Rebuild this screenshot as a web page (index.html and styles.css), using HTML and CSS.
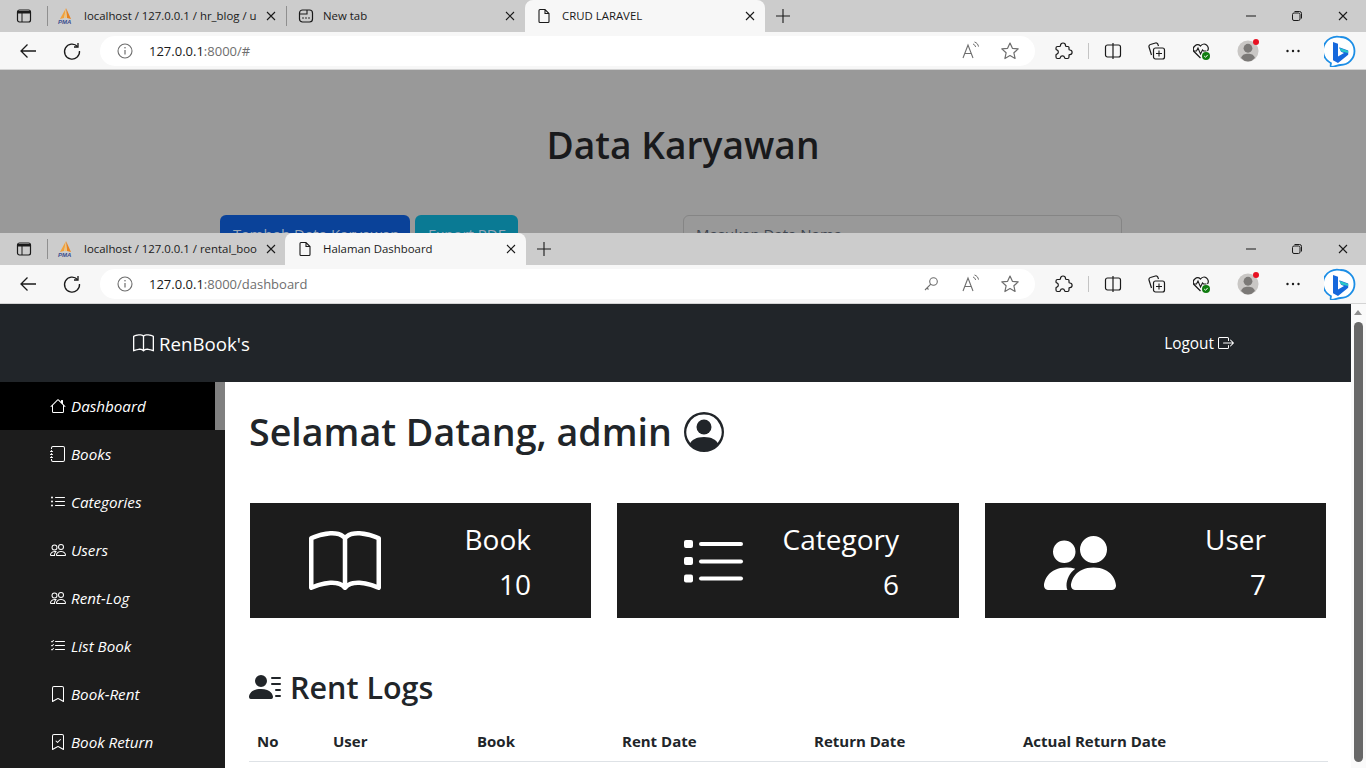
FILE: index.html
```html
<!DOCTYPE html>
<html lang="id">
<head>
    <meta charset="UTF-8">
    <title>Halaman Dashboard</title>
    <link rel="stylesheet" href="styles.css">
</head>
<body>
    <!-- shared icons -->
    <svg class="icon-defs" width="0" height="0">
        <symbol id="i-book" viewBox="0 0 16 16"><path d="M1 2.828c.885-.37 2.154-.769 3.388-.893 1.33-.134 2.458.063 3.112.752v9.746c-.935-.53-2.12-.603-3.213-.493-1.18.12-2.37.461-3.287.811V2.828zm7.5-.141c.654-.689 1.782-.886 3.112-.752 1.234.124 2.503.523 3.388.893v9.923c-.918-.35-2.107-.692-3.287-.81-1.094-.111-2.278-.039-3.213.492V2.687zM8 1.783C7.015.936 5.587.81 4.287.94c-1.514.153-3.042.672-3.994 1.105A.5.5 0 0 0 0 2.5v11a.5.5 0 0 0 .707.455c.882-.4 2.303-.881 3.68-1.02 1.409-.142 2.59.087 3.223.877a.5.5 0 0 0 .78 0c.633-.79 1.814-1.019 3.222-.877 1.378.139 2.8.62 3.681 1.02A.5.5 0 0 0 16 13.5v-11a.5.5 0 0 0-.293-.455c-.952-.433-2.48-.952-3.994-1.105C10.413.809 8.985.936 8 1.783z"/></symbol>
        <symbol id="i-house" viewBox="0 0 16 16"><path d="M8.707 1.5a1 1 0 0 0-1.414 0L.646 8.146a.5.5 0 0 0 .708.708L2 8.207V13.5A1.5 1.5 0 0 0 3.5 15h9a1.5 1.5 0 0 0 1.5-1.5V8.207l.646.647a.5.5 0 0 0 .708-.708L13 5.793V2.5a.5.5 0 0 0-.5-.5h-1a.5.5 0 0 0-.5.5v1.293L8.707 1.5ZM13 7.207V13.5a.5.5 0 0 1-.5.5h-9a.5.5 0 0 1-.5-.5V7.207l5-5 5 5Z"/></symbol>
        <symbol id="i-journal" viewBox="0 0 16 16"><path d="M3 0h10a2 2 0 0 1 2 2v12a2 2 0 0 1-2 2H3a2 2 0 0 1-2-2v-1h1v1a1 1 0 0 0 1 1h10a1 1 0 0 0 1-1V2a1 1 0 0 0-1-1H3a1 1 0 0 0-1 1v1H1V2a2 2 0 0 1 2-2z"/><path d="M1 5v-.5a.5.5 0 0 1 1 0V5h.5a.5.5 0 0 1 0 1h-2a.5.5 0 0 1 0-1H1zm0 3v-.5a.5.5 0 0 1 1 0V8h.5a.5.5 0 0 1 0 1h-2a.5.5 0 0 1 0-1H1zm0 3v-.5a.5.5 0 0 1 1 0v.5h.5a.5.5 0 0 1 0 1h-2a.5.5 0 0 1 0-1H1z"/></symbol>
        <symbol id="i-list" viewBox="0 0 16 16"><path d="M5 11.5a.5.5 0 0 1 .5-.5h9a.5.5 0 0 1 0 1h-9a.5.5 0 0 1-.5-.5zm0-4a.5.5 0 0 1 .5-.5h9a.5.5 0 0 1 0 1h-9a.5.5 0 0 1-.5-.5zm0-4a.5.5 0 0 1 .5-.5h9a.5.5 0 0 1 0 1h-9a.5.5 0 0 1-.5-.5zm-3 1a1 1 0 1 0 0-2 1 1 0 0 0 0 2zm0 4a1 1 0 1 0 0-2 1 1 0 0 0 0 2zm0 4a1 1 0 1 0 0-2 1 1 0 0 0 0 2z"/></symbol>
        <symbol id="i-list-big" viewBox="0 0 72 72"><rect x="8" y="13" width="9" height="8" rx="2"/><rect x="8" y="30" width="9" height="8" rx="2"/><rect x="8" y="47.500" width="9" height="8" rx="2"/><rect x="23" y="15" width="44" height="4" rx="2"/><rect x="23" y="32.500" width="44" height="4" rx="2"/><rect x="23" y="49.500" width="44" height="4" rx="2"/></symbol>
        <symbol id="i-people" viewBox="0 0 16 16"><path d="M15 14s1 0 1-1-1-4-5-4-5 3-5 4 1 1 1 1h8Zm-7.978-1A.261.261 0 0 1 7 12.996c.001-.264.167-1.03.76-1.72C8.312 10.629 9.282 10 11 10c1.717 0 2.687.63 3.24 1.276.593.69.758 1.457.76 1.72l-.008.002a.274.274 0 0 1-.014.002H7.022ZM11 7a2 2 0 1 0 0-4 2 2 0 0 0 0 4Zm3-2a3 3 0 1 1-6 0 3 3 0 0 1 6 0ZM6.936 9.28a5.88 5.88 0 0 0-1.23-.247A7.35 7.35 0 0 0 5 9c-4 0-5 3-5 4 0 .667.333 1 1 1h4.216A2.238 2.238 0 0 1 5 13c0-1.01.377-2.042 1.09-2.904.243-.294.526-.569.846-.816ZM4.92 10A5.493 5.493 0 0 0 4 13H1c0-.26.164-1.03.76-1.724.545-.636 1.492-1.256 3.16-1.275ZM1.5 5.5a3 3 0 1 1 6 0 3 3 0 0 1-6 0Zm3-2a2 2 0 1 0 0 4 2 2 0 0 0 0-4Z"/></symbol>
        <symbol id="i-people-fill" viewBox="0 0 16 16"><path d="M7 14s-1 0-1-1 1-4 5-4 5 3 5 4-1 1-1 1H7Zm4-6a3 3 0 1 0 0-6 3 3 0 0 0 0 6Zm-5.784 6A2.238 2.238 0 0 1 5 13c0-1.355.68-2.75 1.936-3.72A6.325 6.325 0 0 0 5 9c-4 0-5 3-5 4s1 1 1 1h4.216ZM4.5 8a2.5 2.5 0 1 0 0-5 2.5 2.5 0 0 0 0 5Z"/></symbol>
        <symbol id="i-list-check" viewBox="0 0 16 16"><path d="M5 11.5a.5.5 0 0 1 .5-.5h9a.5.5 0 0 1 0 1h-9a.5.5 0 0 1-.5-.5zm0-4a.5.5 0 0 1 .5-.5h9a.5.5 0 0 1 0 1h-9a.5.5 0 0 1-.5-.5zm0-4a.5.5 0 0 1 .5-.5h9a.5.5 0 0 1 0 1h-9a.5.5 0 0 1-.5-.5zM3.854 2.146a.5.5 0 0 1 0 .708l-1.5 1.5a.5.5 0 0 1-.708 0l-.5-.5a.5.5 0 1 1 .708-.708L2 3.293l1.146-1.147a.5.5 0 0 1 .708 0zm0 4a.5.5 0 0 1 0 .708l-1.5 1.5a.5.5 0 0 1-.708 0l-.5-.5a.5.5 0 1 1 .708-.708L2 7.293l1.146-1.147a.5.5 0 0 1 .708 0zm0 4a.5.5 0 0 1 0 .708l-1.5 1.5a.5.5 0 0 1-.708 0l-.5-.5a.5.5 0 0 1 .708-.708l.146.147 1.146-1.147a.5.5 0 0 1 .708 0z"/></symbol>
        <symbol id="i-bookmark" viewBox="0 0 16 16"><path d="M2 2a2 2 0 0 1 2-2h8a2 2 0 0 1 2 2v13.5a.5.5 0 0 1-.777.416L8 13.101l-5.223 2.815A.5.5 0 0 1 2 15.5V2zm2-1a1 1 0 0 0-1 1v12.566l4.723-2.482a.5.5 0 0 1 .554 0L13 14.566V2a1 1 0 0 0-1-1H4z"/></symbol>
        <symbol id="i-bookmark-check" viewBox="0 0 16 16"><path d="M10.854 5.146a.5.5 0 0 1 0 .708l-3 3a.5.5 0 0 1-.708 0l-1.5-1.5a.5.5 0 1 1 .708-.708L7.5 7.793l2.646-2.647a.5.5 0 0 1 .708 0z"/><path d="M2 2a2 2 0 0 1 2-2h8a2 2 0 0 1 2 2v13.5a.5.5 0 0 1-.777.416L8 13.101l-5.223 2.815A.5.5 0 0 1 2 15.5V2zm2-1a1 1 0 0 0-1 1v12.566l4.723-2.482a.5.5 0 0 1 .554 0L13 14.566V2a1 1 0 0 0-1-1H4z"/></symbol>
        <symbol id="i-person-circle" viewBox="0 0 16 16"><path d="M11 6a3 3 0 1 1-6 0 3 3 0 0 1 6 0z"/><path fill-rule="evenodd" d="M0 8a8 8 0 1 1 16 0A8 8 0 0 1 0 8zm8-7a7 7 0 0 0-5.468 11.37C3.242 11.226 4.805 10 8 10s4.757 1.225 5.468 2.37A7 7 0 0 0 8 1z"/></symbol>
        <symbol id="i-person-lines" viewBox="0 0 16 16"><path d="M6 8a3 3 0 1 0 0-6 3 3 0 0 0 0 6zm-5 6s-1 0-1-1 1-4 6-4 6 3 6 4-1 1-1 1H1zM11 3.5a.5.5 0 0 1 .5-.5h4a.5.5 0 0 1 0 1h-4a.5.5 0 0 1-.5-.5zm.5 2.5a.5.5 0 0 0 0 1h4a.5.5 0 0 0 0-1h-4zm2 3a.5.5 0 0 0 0 1h2a.5.5 0 0 0 0-1h-2zm0 3a.5.5 0 0 0 0 1h2a.5.5 0 0 0 0-1h-2z"/></symbol>
        <symbol id="i-logout" viewBox="0 0 16 16"><path d="M10 12.5a.5.5 0 0 1-.5.5h-8a.5.5 0 0 1-.5-.5v-9a.5.5 0 0 1 .5-.5h8a.5.5 0 0 1 .5.5v2a.5.5 0 0 0 1 0v-2A1.5 1.5 0 0 0 9.5 2h-8A1.5 1.5 0 0 0 0 3.5v9A1.5 1.5 0 0 0 1.5 14h8a1.5 1.5 0 0 0 1.5-1.5v-2a.5.5 0 0 0-1 0v2z"/><path d="M15.854 8.354a.5.5 0 0 0 0-.708l-3-3a.5.5 0 0 0-.708.708L14.293 7.5H5.5a.5.5 0 0 0 0 1h8.793l-2.147 2.146a.5.5 0 0 0 .708.708l3-3z"/></symbol>

        <!-- browser chrome -->
        <symbol id="e-sidebar" viewBox="0 0 16 16"><rect x="1.5" y="2" width="13" height="12" rx="2" fill="none" stroke="currentColor" stroke-width="1.2"/><path d="M2 3h12v2.5H2z" fill="currentColor"/><path d="M6 5v9" stroke="currentColor"/></symbol>
        <symbol id="e-pma" viewBox="0 0 18 18"><path d="M9 1 3 12l4-1z" fill="#f2a13a"/><path d="M9 1l1 10 4 1z" fill="#e8821e"/><path d="M8.6 2 7.6 11h2z" fill="#f9c46b"/><text x="1" y="17" class="pma-text">PMA</text></symbol>
        <symbol id="e-newtab" viewBox="0 0 16 16"><rect x="1.5" y="2" width="13" height="12" rx="3" fill="none" stroke="currentColor" stroke-width="1.2"/><path d="M2 6h7V2" fill="none" stroke="currentColor" stroke-width="1.1"/><circle cx="5" cy="10" r=".8" fill="currentColor"/><circle cx="8" cy="10" r=".8" fill="currentColor"/><circle cx="11" cy="10" r=".8" fill="currentColor"/></symbol>
        <symbol id="e-page" viewBox="0 0 16 16"><path d="M3 2.5a1 1 0 0 1 1-1h5l4 4v8a1 1 0 0 1-1 1H4a1 1 0 0 1-1-1zM9 1.5v4h4" fill="none" stroke="currentColor" stroke-width="1.1"/></symbol>
        <symbol id="e-close" viewBox="0 0 12 12"><path d="M2 2l8 8M10 2l-8 8" stroke="currentColor" stroke-width="1.1" fill="none"/></symbol>
        <symbol id="e-plus" viewBox="0 0 16 16"><path d="M8 1v14M1 8h14" stroke="currentColor" stroke-width="1.1" fill="none"/></symbol>
        <symbol id="e-min" viewBox="0 0 12 12"><path d="M1 6h10" stroke="currentColor" fill="none"/></symbol>
        <symbol id="e-restore" viewBox="0 0 12 12"><rect x="1.5" y="3" width="7.5" height="7.5" rx="1.5" fill="none" stroke="currentColor"/><path d="M3.5 1.5h5a2 2 0 0 1 2 2v5" fill="none" stroke="currentColor"/></symbol>
        <symbol id="e-back" viewBox="0 0 20 20"><path d="M18 10H3M9.5 3.5 3 10l6.5 6.5" fill="none" stroke="currentColor" stroke-width="1.3"/></symbol>
        <symbol id="e-refresh" viewBox="0 0 20 20"><path d="M15.5 5.5A7.5 7.5 0 1 0 17.5 10" fill="none" stroke="currentColor" stroke-width="1.3"/><path d="M12 6h4V2" fill="none" stroke="currentColor" stroke-width="1.3"/></symbol>
        <symbol id="e-info" viewBox="0 0 16 16"><circle cx="8" cy="8" r="7" fill="none" stroke="currentColor" stroke-width="1.1"/><path d="M8 7v4.5" stroke="currentColor" stroke-width="1.2"/><circle cx="8" cy="4.8" r=".8" fill="currentColor"/></symbol>
        <symbol id="e-key" viewBox="1 0 16 16"><circle cx="10.5" cy="5.5" r="3.8" fill="none" stroke="currentColor" stroke-width="1.1"/><path d="M7.8 8.2 2 14M4 12l1.5 1.5" fill="none" stroke="currentColor" stroke-width="1.1"/></symbol>
        <symbol id="e-read" viewBox="-1 0 20 20"><path d="M2 17 7 4l5 13M3.8 12.5h6.4" fill="none" stroke="currentColor" stroke-width="1.1"/><path d="M12 3c1.5.6 2.3 1.6 2.6 3M13.5 1c2.3.7 3.6 2.3 4 4.6" fill="none" stroke="currentColor"/></symbol>
        <symbol id="e-star" viewBox="0 0 20 20"><path d="m10 2 2.4 5.3 5.8.6-4.3 3.9 1.2 5.7L10 14.6l-5.1 2.9 1.2-5.7-4.3-3.9 5.8-.6z" fill="none" stroke="currentColor" stroke-width="1.2" stroke-linejoin="round"/></symbol>
        <symbol id="e-puzzle" viewBox="0 0 20 20"><path d="M7.500 4.500a2.500 2.500 0 0 1 5 0c0 .8.500 1 1.200 1h1.300a1 1 0 0 1 1 1v1.700c0 .6.300.8.800.8a2.300 2.300 0 0 1 0 4.600c-.5 0-.8.200-.8.800V16a1.500 1.500 0 0 1-1.500 1.500h-2c-.6 0-.8-.3-.9-.8a2.200 2.200 0 0 0-4.300 0c-.1.500-.3.800-.9.800H4.500A1.500 1.500 0 0 1 3 16v-2c0-.6.300-.8.800-.9a2.200 2.200 0 0 0 0-4.200C3.300 8.800 3 8.600 3 8V7a1.500 1.500 0 0 1 1.500-1.500h1.800c.7 0 1.200-.2 1.200-1z" fill="none" stroke="currentColor" stroke-width="1.200" stroke-linejoin="round"/></symbol>
        <symbol id="e-split" viewBox="0 0 20 20"><rect x="2.500" y="4" width="15" height="12" rx="2" fill="none" stroke="currentColor" stroke-width="1.2"/><path d="M10 2v16" stroke="currentColor" stroke-width="1.2"/></symbol>
        <symbol id="e-collections" viewBox="1.500 0 20 20"><rect x="7" y="7" width="11" height="11" rx="2" fill="none" stroke="currentColor" stroke-width="1.2"/><path d="M12.500 9.500v6M9.500 12.500h6" stroke="currentColor" stroke-width="1.100"/><path d="M5 14 2.500 6a2 2 0 0 1 1.400-2.500L9 2a2 2 0 0 1 2.500 1.500L12 5" fill="none" stroke="currentColor" stroke-width="1.2"/></symbol>
        <symbol id="e-health" viewBox="2 0 20 20"><path d="M9.500 17 3 10.500A4.300 4.300 0 0 1 9.500 5a4.300 4.300 0 0 1 7 5" fill="none" stroke="currentColor" stroke-width="1.2"/><path d="M1.500 10h4l1.500-3 2.500 6 2-4 1 1h3" fill="none" stroke="currentColor" stroke-width="1.1"/><circle cx="15" cy="15" r="4" fill="#107c10"/><path d="m13.200 15 1.300 1.300 2.200-2.400" fill="none" stroke="#fff"/></symbol>
        <symbol id="e-profile" viewBox="0 0 24 24"><circle cx="12" cy="12" r="11.500" fill="#c9c7c5"/><circle cx="12" cy="9" r="4.800" fill="#7b7977"/><path d="M4.500 19.500c1-3.500 4-4.500 7.500-4.500s6.500 1 7.500 4.500A11 11 0 0 1 12 23.500a11 11 0 0 1-7.500-4" fill="#7b7977"/></symbol>
        <symbol id="e-dots" viewBox="0 0 16 16"><circle cx="2.500" cy="8" r="1.200"/><circle cx="8" cy="8" r="1.200"/><circle cx="13.500" cy="8" r="1.200"/></symbol>
        <symbol id="e-bing" viewBox="0 0 32 32">
            <path d="M16.500 2a14 14 0 0 1 0 28c-3 0-6 2-9.500 1.800-.8-.3-.3-2 0-3.600A14 14 0 0 1 16.500 2z" fill="#fff" stroke="#1c8ee6" stroke-width="1.800"/>
            <path d="M9 7l5 1.800v12.700l6-3.400-3-1.400-1.800-4.500 9 3.200v4.300L14 28l-5-2.800z" fill="#1668dc"/>
            <path d="M15.200 12.700l9 3.200v2.100l-7-1.400z" fill="#2bc7c9"/>
        </symbol>
    </svg>

    <div class="window window-back">
        <div class="tab-strip">
            <div class="strip-btn"><svg class="ico-16"><use href="#e-sidebar"/></svg></div>
            <span class="strip-sep"></span>
            <div class="tab">
                <svg class="ico-18"><use href="#e-pma"/></svg>
                <span class="tab-title">localhost / 127.0.0.1 / hr_blog / u</span>
                <svg class="ico-12"><use href="#e-close"/></svg>
            </div>
            <span class="strip-sep"></span>
            <div class="tab">
                <svg class="ico-16"><use href="#e-newtab"/></svg>
                <span class="tab-title">New tab</span>
                <svg class="ico-12"><use href="#e-close"/></svg>
            </div>
            <div class="tab tab-active">
                <svg class="ico-16"><use href="#e-page"/></svg>
                <span class="tab-title">CRUD LARAVEL</span>
                <svg class="ico-12"><use href="#e-close"/></svg>
            </div>
            <div class="tab-plus"><svg class="ico-16"><use href="#e-plus"/></svg></div>
            <div class="win-controls">
                <svg class="ico-12"><use href="#e-min"/></svg>
                <svg class="ico-12"><use href="#e-restore"/></svg>
                <svg class="ico-12"><use href="#e-close"/></svg>
            </div>
        </div>
        <div class="toolbar">
            <div class="tool"><svg class="ico-20"><use href="#e-back"/></svg></div>
            <div class="tool"><svg class="ico-20"><use href="#e-refresh"/></svg></div>
            <div class="address">
                <svg class="ico-16 muted"><use href="#e-info"/></svg>
                <span class="url"><b>127.0.0.1</b>:8000/#</span>
                <svg class="ico-20 muted"><use href="#e-read"/></svg>
                <svg class="ico-20 muted"><use href="#e-star"/></svg>
            </div>
            <div class="tool tool-first"><svg class="ico-20"><use href="#e-puzzle"/></svg></div>
            <div class="tool-sep"></div>
            <div class="tool"><svg class="ico-20"><use href="#e-split"/></svg></div>
            <div class="tool"><svg class="ico-20"><use href="#e-collections"/></svg></div>
            <div class="tool"><svg class="ico-20"><use href="#e-health"/></svg></div>
            <div class="tool profile"><svg class="ico-22"><use href="#e-profile"/></svg><span class="red-dot"></span></div>
            <div class="tool"><svg class="ico-16"><use href="#e-dots"/></svg></div>
            <div class="tool tool-bing"><svg class="ico-32"><use href="#e-bing"/></svg></div>
        </div>
        <div class="crud-page">
            <h1>Data Karyawan</h1>
            <div class="crud-row">
                <div class="crud-actions">
                    <span class="crud-btn btn-add">Tambah Data Karyawan</span>
                    <span class="crud-btn btn-pdf">Export PDF</span>
                </div>
                <div class="crud-search">Masukan Data Nama</div>
            </div>
        </div>
    </div>

    <div class="window window-front">
        <div class="tab-strip">
            <div class="strip-btn"><svg class="ico-16"><use href="#e-sidebar"/></svg></div>
            <span class="strip-sep"></span>
            <div class="tab">
                <svg class="ico-18"><use href="#e-pma"/></svg>
                <span class="tab-title">localhost / 127.0.0.1 / rental_boo</span>
                <svg class="ico-12"><use href="#e-close"/></svg>
            </div>
            <div class="tab tab-active">
                <svg class="ico-16"><use href="#e-page"/></svg>
                <span class="tab-title">Halaman Dashboard</span>
                <svg class="ico-12"><use href="#e-close"/></svg>
            </div>
            <div class="tab-plus"><svg class="ico-16"><use href="#e-plus"/></svg></div>
            <div class="win-controls">
                <svg class="ico-12"><use href="#e-min"/></svg>
                <svg class="ico-12"><use href="#e-restore"/></svg>
                <svg class="ico-12"><use href="#e-close"/></svg>
            </div>
        </div>
        <div class="toolbar">
            <div class="tool"><svg class="ico-20"><use href="#e-back"/></svg></div>
            <div class="tool"><svg class="ico-20"><use href="#e-refresh"/></svg></div>
            <div class="address">
                <svg class="ico-16 muted"><use href="#e-info"/></svg>
                <span class="url"><b>127.0.0.1</b>:8000/dashboard</span>
                <svg class="ico-16 muted"><use href="#e-key"/></svg>
                <svg class="ico-20 muted"><use href="#e-read"/></svg>
                <svg class="ico-20 muted"><use href="#e-star"/></svg>
            </div>
            <div class="tool tool-first"><svg class="ico-20"><use href="#e-puzzle"/></svg></div>
            <div class="tool-sep"></div>
            <div class="tool"><svg class="ico-20"><use href="#e-split"/></svg></div>
            <div class="tool"><svg class="ico-20"><use href="#e-collections"/></svg></div>
            <div class="tool"><svg class="ico-20"><use href="#e-health"/></svg></div>
            <div class="tool profile"><svg class="ico-22"><use href="#e-profile"/></svg><span class="red-dot"></span></div>
            <div class="tool"><svg class="ico-16"><use href="#e-dots"/></svg></div>
            <div class="tool tool-bing"><svg class="ico-32"><use href="#e-bing"/></svg></div>
        </div>

        <div class="viewport">
            <div class="app">
                <nav class="navbar">
                    <a class="brand"><svg class="bi"><use href="#i-book"/></svg> RenBook's</a>
                    <a class="logout">Logout <svg class="bi"><use href="#i-logout"/></svg></a>
                </nav>
                <div class="body-row">
                    <aside class="sidebar">
                        <a class="side-link active"><svg class="bi"><use href="#i-house"/></svg>Dashboard</a>
                        <a class="side-link"><svg class="bi"><use href="#i-journal"/></svg>Books</a>
                        <a class="side-link"><svg class="bi"><use href="#i-list"/></svg>Categories</a>
                        <a class="side-link"><svg class="bi"><use href="#i-people"/></svg>Users</a>
                        <a class="side-link"><svg class="bi"><use href="#i-people"/></svg>Rent-Log</a>
                        <a class="side-link"><svg class="bi"><use href="#i-list-check"/></svg>List Book</a>
                        <a class="side-link"><svg class="bi"><use href="#i-bookmark"/></svg>Book-Rent</a>
                        <a class="side-link"><svg class="bi"><use href="#i-bookmark-check"/></svg>Book Return</a>
                    </aside>
                    <main class="content">
                        <h1 class="welcome">Selamat Datang, admin <svg class="bi"><use href="#i-person-circle"/></svg></h1>
                        <div class="cards">
                            <div class="card">
                                <svg class="card-icon"><use href="#i-book"/></svg>
                                <div class="card-text"><div>Book</div><div>10</div></div>
                            </div>
                            <div class="card">
                                <svg class="card-icon"><use href="#i-list-big"/></svg>
                                <div class="card-text"><div>Category</div><div>6</div></div>
                            </div>
                            <div class="card">
                                <svg class="card-icon"><use href="#i-people-fill"/></svg>
                                <div class="card-text"><div>User</div><div>7</div></div>
                            </div>
                        </div>
                        <h2 class="logs-title"><svg class="bi"><use href="#i-person-lines"/></svg> Rent Logs</h2>
                        <table class="logs">
                            <thead>
                                <tr>
                                    <th class="col-no">No</th>
                                    <th class="col-user">User</th>
                                    <th class="col-book">Book</th>
                                    <th class="col-rent">Rent Date</th>
                                    <th class="col-return">Return Date</th>
                                    <th>Actual Return Date</th>
                                </tr>
                            </thead>
                        </table>
                    </main>
                </div>
            </div>
            <div class="scrollbar">
                <span class="scroll-up"></span>
                <span class="scroll-thumb"></span>
            </div>
        </div>
    </div>
</body>
</html>
```

FILE: styles.css
```css
* {
    box-sizing: border-box;
}
body {
    margin: 0;
    height: 768px;
    overflow: hidden;
    font-family: "Open Sans", "Noto Sans", sans-serif;
    color: #212529;
    background-color: #fff;
}
svg {
    display: block;
    flex: none;
    fill: currentColor;
}
.icon-defs {
    position: absolute;
}
.pma-text {
    font: italic 700 6px "Liberation Sans", sans-serif;
    fill: #3b4d8f;
}
.ico-12 { width: 12px; height: 12px; }
.ico-16 { width: 16px; height: 16px; }
.ico-18 { width: 18px; height: 18px; }
.ico-20 { width: 20px; height: 20px; }
.ico-22 { width: 22px; height: 22px; }
.ico-32 { width: 32px; height: 32px; }
.muted { color: #6e6e6e; }

/* two browser windows, one over the other */
.window {
    overflow: hidden;
}
.window-back { height: 233px; }
.window-front { height: 535px; }

.tab-strip {
    display: flex;
    align-items: center;
    height: 32px;
    background-color: #cccccc;
    color: #1a1a1a;
}
.strip-btn {
    display: flex;
    align-items: center;
    justify-content: center;
    width: 47px;
    height: 32px;
}
.strip-sep {
    flex: none;
    width: 1px;
    height: 20px;
    background-color: #8f8f8f;
}
.tab {
    display: flex;
    align-items: center;
    flex: none;
    width: 238px;
    height: 32px;
    padding: 0 9px 0 11px;
    font-size: 11.4px;
}
.tab .ico-18 { margin: 0 9px 0 -2px; }
.tab .ico-16 { margin-right: 9px; }
.tab-active {
    width: 240px;
    background-color: #f7f7f7;
    border-radius: 8px 8px 0 0;
}
.tab-active .ico-16 { margin-right: 10px; }
.window-front .tab-active {
    width: 241px;
    margin-left: -1px;
    padding-left: 12px;
}
.tab-title {
    flex: 1;
    min-width: 0;
    margin-top: -2px;
    overflow: hidden;
    white-space: nowrap;
}
.tab-plus {
    display: flex;
    align-items: center;
    justify-content: center;
    width: 36px;
    height: 32px;
}
.win-controls {
    display: flex;
    align-items: center;
    gap: 34px;
    height: 32px;
    margin-left: auto;
    padding-right: 17px;
}

.toolbar {
    display: flex;
    align-items: center;
    height: 38px;
    padding: 1px 0 0 6px;
    background-color: #f7f7f7;
    border-bottom: 1px solid #d4d4d4;
    color: #1a1a1a;
}
.window-front .toolbar {
    height: 39px;
    padding-top: 0;
}
.tool {
    display: flex;
    align-items: center;
    justify-content: center;
    width: 44px;
    height: 30px;
}
.tool-first { margin-left: 6px; }
.tool-sep {
    width: 1px;
    height: 16px;
    margin: 0 1px 0 3px;
    background-color: #c4c4c4;
}
.tool-sep ~ .tool { width: 45px; }
.tool-sep ~ .tool-bing { width: 50px; }
.address {
    display: flex;
    align-items: center;
    gap: 20px;
    width: 935px;
    height: 30px;
    margin-left: 6px;
    padding: 0 15px 0 17px;
    background-color: #fff;
    border-radius: 15px;
}
.url {
    flex: 1;
    margin-left: -4px;
    font-size: 13px;
    color: #6e6e6e;
}
.url b {
    font-weight: 400;
    color: #1a1a1a;
}
.profile { position: relative; }
.red-dot {
    position: absolute;
    top: 3px;
    right: 11px;
    width: 6px;
    height: 6px;
    border-radius: 50%;
    background-color: #e81123;
}

/* dimmed page behind the modal */
.crud-page {
    height: 163px;
    padding-top: 50px;
    background-color: #999999;
    color: #191a1c;
}
.crud-page h1 {
    margin: 0;
    font-size: 37.2px;
    font-weight: 600;
    line-height: 50px;
    text-align: center;
}
.crud-row {
    display: flex;
    margin-top: 45px;
    padding-left: 220px;
}
.crud-actions {
    display: flex;
    gap: 5px;
    width: 463px;
}
.crud-btn {
    height: 38px;
    padding: 0 13px;
    border-radius: 6px 6px 0 0;
    font-size: 15px;
    line-height: 38px;
    color: #98a6b8;
    white-space: nowrap;
}
.btn-add {
    width: 190px;
    background-color: #0a4299;
}
.btn-pdf {
    width: 103px;
    background-color: #0a7a94;
}
.crud-search {
    width: 439px;
    height: 38px;
    padding-left: 12px;
    border: 1px solid #858585;
    border-radius: 6px;
    font-size: 15px;
    line-height: 36px;
    color: #3f4650;
}

/* dashboard page */
.viewport {
    display: flex;
    height: 464px;
    overflow: hidden;
}
.app {
    flex: 1;
    min-width: 0;
}
.navbar {
    display: flex;
    align-items: center;
    justify-content: space-between;
    height: 78px;
    padding: 0 117px 0 133px;
    background-color: #212529;
    color: #fff;
}
.brand {
    display: flex;
    align-items: center;
    gap: 5px;
    font-size: 18.7px;
}
.brand .bi { width: 21px; height: 21px; }
.logout {
    display: flex;
    align-items: center;
    gap: 4px;
    font-size: 15.4px;
}
.logout .bi { width: 16px; height: 16px; }
.body-row {
    display: flex;
}
.sidebar {
    flex: none;
    width: 225px;
    height: 400px;
    background-color: #1c1c1c;
}
.side-link {
    display: flex;
    align-items: center;
    gap: 5px;
    height: 48px;
    padding-left: 50px;
    font-size: 15.2px;
    font-style: italic;
    color: #fff;
}
.side-link .bi { width: 16px; height: 16px; }
.side-link.active {
    background-color: #000;
    border-right: 10px solid #808080;
}
.content {
    flex: 1;
    min-width: 0;
    padding: 26px 25px 0 24px;
}
.welcome {
    display: flex;
    align-items: center;
    gap: 12px;
    margin: 0;
    font-size: 37.6px;
    font-weight: 600;
    line-height: 48px;
}
.welcome .bi { width: 40px; height: 40px; }
.cards {
    display: grid;
    grid-template-columns: 341px 342px 341px;
    gap: 26px;
    margin: 47px 0 0 1px;
}
.card {
    display: grid;
    grid-template-columns: 190px minmax(0, 1fr);
    align-items: center;
    height: 115px;
    padding-right: 60px;
    background-color: #1c1c1c;
    color: #fff;
}
.card-icon {
    width: 72px;
    height: 72px;
    margin-top: 4px;
    justify-self: center;
}
.card-text {
    justify-self: end;
    margin-top: 2px;
    font-size: 28px;
    line-height: 45px;
    text-align: right;
}
.logs-title {
    display: flex;
    align-items: center;
    gap: 9px;
    margin: 50px 0 0;
    font-size: 30.5px;
    font-weight: 600;
    line-height: 38px;
}
.logs-title .bi { width: 32px; height: 32px; }
.logs {
    width: 1079px;
    margin-top: 15px;
    border-collapse: collapse;
    table-layout: fixed;
}
.logs th {
    padding: 8px;
    border-bottom: 1px solid #dee2e6;
    font-size: 15px;
    font-weight: 700;
    line-height: 24px;
    text-align: left;
}
.col-no { width: 76px; }
.col-user { width: 144px; }
.col-book { width: 145px; }
.col-rent { width: 192px; }
.col-return { width: 209px; }

.scrollbar {
    position: relative;
    flex: none;
    width: 15px;
    background-color: #fafafa;
}
.scroll-up {
    position: absolute;
    top: 6px;
    left: 3px;
    border-left: 4.5px solid transparent;
    border-right: 4.5px solid transparent;
    border-bottom: 5px solid #8f8f8f;
}
.scroll-thumb {
    position: absolute;
    top: 18px;
    left: 3px;
    width: 9px;
    height: 440px;
    border-radius: 5px;
    background-color: #686868;
}
```
